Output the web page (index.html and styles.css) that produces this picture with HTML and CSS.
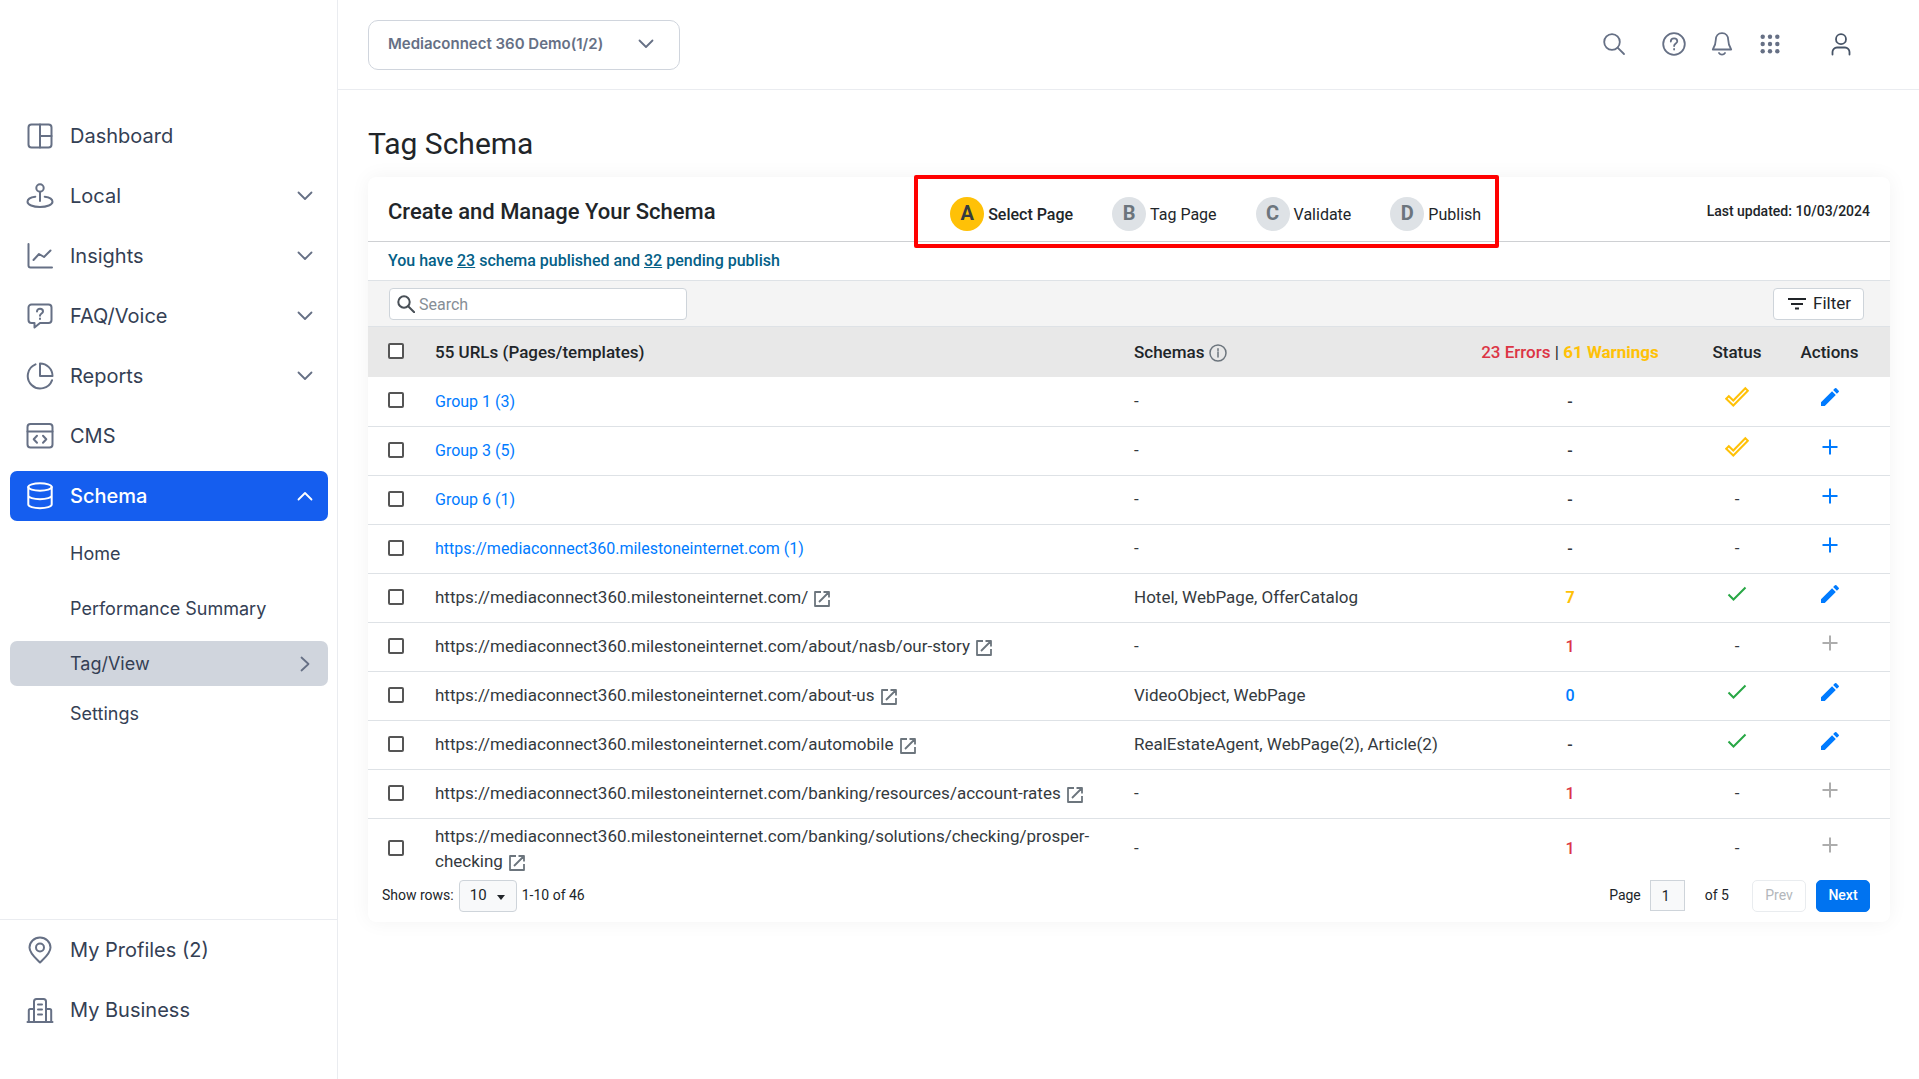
FILE: index.html
```html
<!DOCTYPE html>
<html lang="en">
<head>
  <meta charset="UTF-8">
  <meta name="viewport" content="width=device-width, initial-scale=1.0">
  <title>Tag Schema</title>
  <link rel="stylesheet" href="styles.css">
</head>
<body>
  <!-- Icon sprite -->
  <svg class="sprite" aria-hidden="true">
    <symbol id="i-dashboard" viewBox="0 0 28 28"><rect x="2.5" y="2.5" width="23" height="23" rx="3"/><path d="M14 2.5v23M14 14h11.500"/></symbol>
    <symbol id="i-local" viewBox="0 0 28 28"><circle cx="14" cy="6" r="3.700"/><path d="M14 9.700v9.300M9.300 14.700C4.500 15.300 1.500 17.300 1.500 19.800c0 3 5.500 5.200 12.500 5.200s12.500-2.200 12.500-5.200c0-2.500-3-4.500-7.800-5.100"/></symbol>
    <symbol id="i-insights" viewBox="0 0 28 28"><path d="M2.500 2v21.500a2 2 0 0 0 2 2H26M7.500 18l5.500-6 5 3 6.500-6.500"/></symbol>
    <symbol id="i-faq" viewBox="0 0 28 28"><path d="M5.500 2.500h17a3 3 0 0 1 3 3V18a3 3 0 0 1-3 3H14l-5.500 4.500V21h-3a3 3 0 0 1-3-3V5.500a3 3 0 0 1 3-3z"/><path d="M11 9.500c0-1.600 1.300-2.800 3-2.800s3 1.200 3 2.700c0 2.100-3 2.100-3 4.300M14 16.600v.4"/></symbol>
    <symbol id="i-reports" viewBox="0 0 28 28"><path d="M9.500 2.400A12.500 12.500 0 1 0 26 18.300"/><path d="M14 1.500A12.500 12.500 0 0 1 26.500 14H14z"/></symbol>
    <symbol id="i-cms" viewBox="0 0 28 28"><rect x="1.500" y="2" width="25" height="23.500" rx="3"/><path d="M1.500 9.500h25M11 13.700l-3.300 3.500 3.300 3.500M17 13.700l3.300 3.500-3.300 3.500"/></symbol>
    <symbol id="i-schema" viewBox="0 0 28 28"><ellipse cx="14" cy="5" rx="11.700" ry="3.700"/><path d="M2.300 5v17.500c0 2 5.200 3.700 11.700 3.700s11.700-1.700 11.700-3.700V5M2.300 13.500c0 2 5.200 3.700 11.700 3.700s11.700-1.700 11.700-3.700"/></symbol>
    <symbol id="i-pin" viewBox="0 0 28 28"><path d="M14 26.500c-4-4-10.500-9-10.500-15a10.500 10 0 0 1 21 0c0 6-6.500 11-10.500 15z"/><circle cx="14" cy="11.500" r="4"/></symbol>
    <symbol id="i-business" viewBox="0 0 28 28"><path d="M1.500 26h25M2.800 26V14.500a1.500 1.500 0 0 1 1.500-1.500H8M25.200 26V14.500a1.500 1.500 0 0 0-1.500-1.500H20M8 26V5.500A2.500 2.500 0 0 1 10.500 3h7A2.500 2.500 0 0 1 20 5.500V26M12 8.500h4M12 13.500h4M12 18.500h4"/></symbol>
    <symbol id="i-down" viewBox="0 0 16 16"><path d="M1.500 4.500L8 11l6.500-6.500"/></symbol>
    <symbol id="i-up" viewBox="0 0 16 16"><path d="M1.500 11.500L8 5l6.500 6.500"/></symbol>
    <symbol id="i-right" viewBox="0 0 16 16"><path d="M4.500 1.500L11.500 8l-7 6.500"/></symbol>
    <symbol id="i-search" viewBox="0 0 24 24"><circle cx="10" cy="10" r="7.800"/><path d="M15.600 15.600l6.400 6.400"/></symbol>
    <symbol id="i-help" viewBox="0 0 24 24"><circle cx="12" cy="12" r="10.800"/><path d="M8.800 9.600c0-1.900 1.400-3.200 3.300-3.200s3.200 1.300 3.200 2.900c0 2.300-3.200 2.300-3.200 4.700M12.100 17v.5"/></symbol>
    <symbol id="i-bell" viewBox="0 0 24 24"><path d="M12 1.200c3.900 0 6.200 2.800 6.200 6.500 0 4.800 1.200 6.800 3 9.800H2.800c1.800-3 3-5 3-9.800C5.800 4 8.100 1.200 12 1.200zM9 21c.8 1.200 1.800 1.600 3 1.600s2.200-.4 3-1.600"/></symbol>
    <symbol id="i-grid" viewBox="0 0 24 24"><g fill="currentColor" stroke="none"><circle cx="4.700" cy="4.700" r="2.200"/><circle cx="12" cy="4.700" r="2.200"/><circle cx="19.300" cy="4.700" r="2.200"/><circle cx="4.700" cy="12" r="2.200"/><circle cx="12" cy="12" r="2.200"/><circle cx="19.300" cy="12" r="2.200"/><circle cx="4.700" cy="19.300" r="2.200"/><circle cx="12" cy="19.300" r="2.200"/><circle cx="19.300" cy="19.300" r="2.200"/></g></symbol>
    <symbol id="i-user" viewBox="0 0 24 24"><circle cx="12" cy="7.200" r="5"/><path d="M3.500 22.500V20a4.500 4.500 0 0 1 4.500-4.500h8a4.500 4.500 0 0 1 4.500 4.500v2.500"/></symbol>
    <symbol id="i-lens" viewBox="0 0 18 18"><circle cx="7" cy="7" r="5.700"/><path d="M11.200 11.200l6 6"/></symbol>
    <symbol id="i-filter" viewBox="0 0 18 18"><path d="M0 4h18M3 9h12M7 13.500h4"/></symbol>
    <symbol id="i-info" viewBox="0 0 18 18"><circle cx="9" cy="9" r="8"/><path d="M9 8v5M9 4.800v1.600"/></symbol>
    <symbol id="i-open" viewBox="0 0 16 16"><path d="M7 1H1v14h14V9M9.500 1H15v5.500M15 1L5 11"/></symbol>
    <symbol id="i-double" viewBox="0 0 24 24"><path d="M1.200 13.700l2.600-2.500 4.500 4.300L20.300 3.200 22.800 5.700 8.300 20.500z"/></symbol>
    <symbol id="i-check" viewBox="0 0 24 24"><path d="M3.500 12.500l5 5L20.500 5.500"/></symbol>
    <symbol id="i-pencil" viewBox="0 0 24 24"><path fill="currentColor" stroke="none" d="M3 17.250V21h3.750L17.810 9.940l-3.750-3.750L3 17.250zM20.710 7.040a1 1 0 0 0 0-1.410l-2.340-2.340a1 1 0 0 0-1.410 0l-1.830 1.830 3.750 3.750 1.830-1.830z"/></symbol>
    <symbol id="i-plus" viewBox="0 0 24 24"><path d="M12 4.500v15M4.500 12h15"/></symbol>
  </svg>

  <div class="layout">
    <!-- Sidebar -->
    <aside class="sidebar">
      <nav class="nav">
        <a class="nav-item" href="#"><svg class="nav-icon"><use href="#i-dashboard"/></svg><span>Dashboard</span></a>
        <a class="nav-item" href="#"><svg class="nav-icon"><use href="#i-local"/></svg><span>Local</span><svg class="chevron"><use href="#i-down"/></svg></a>
        <a class="nav-item" href="#"><svg class="nav-icon"><use href="#i-insights"/></svg><span>Insights</span><svg class="chevron"><use href="#i-down"/></svg></a>
        <a class="nav-item" href="#"><svg class="nav-icon"><use href="#i-faq"/></svg><span>FAQ/Voice</span><svg class="chevron"><use href="#i-down"/></svg></a>
        <a class="nav-item" href="#"><svg class="nav-icon"><use href="#i-reports"/></svg><span>Reports</span><svg class="chevron"><use href="#i-down"/></svg></a>
        <a class="nav-item" href="#"><svg class="nav-icon"><use href="#i-cms"/></svg><span>CMS</span></a>
        <a class="nav-item active" href="#"><svg class="nav-icon"><use href="#i-schema"/></svg><span>Schema</span><svg class="chevron"><use href="#i-up"/></svg></a>
        <a class="sub-item" href="#">Home</a>
        <a class="sub-item" href="#">Performance Summary</a>
        <a class="sub-item current" href="#">Tag/View<svg class="chevron"><use href="#i-right"/></svg></a>
        <a class="sub-item" href="#">Settings</a>
      </nav>
      <nav class="nav-bottom">
        <a class="nav-item" href="#"><svg class="nav-icon"><use href="#i-pin"/></svg><span>My Profiles (2)</span></a>
        <a class="nav-item" href="#"><svg class="nav-icon"><use href="#i-business"/></svg><span>My Business</span></a>
      </nav>
    </aside>

    <div class="main">
      <!-- Top bar -->
      <header class="topbar">
        <div class="account">
          <select aria-label="Account"><option>Mediaconnect 360 Demo(1/2)</option></select>
          <svg class="chevron"><use href="#i-down"/></svg>
        </div>
        <div class="tools">
          <button class="tool tool-search" aria-label="Search"><svg><use href="#i-search"/></svg></button>
          <button class="tool" aria-label="Help"><svg><use href="#i-help"/></svg></button>
          <button class="tool" aria-label="Notifications"><svg><use href="#i-bell"/></svg></button>
          <button class="tool" aria-label="Apps"><svg><use href="#i-grid"/></svg></button>
          <button class="tool tool-user" aria-label="Profile"><svg><use href="#i-user"/></svg></button>
        </div>
      </header>

      <main class="content">
        <h1>Tag Schema</h1>
        <section class="card">
          <div class="card-head">
            <h2>Create and Manage Your Schema</h2>
            <ol class="steps">
              <li class="step on"><b>A</b>Select Page</li>
              <li class="step"><b>B</b>Tag Page</li>
              <li class="step"><b>C</b>Validate</li>
              <li class="step"><b>D</b>Publish</li>
            </ol>
            <span class="updated">Last updated: 10/03/2024</span>
          </div>
          <p class="summary">You have <a href="#">23</a> schema published and <a href="#">32</a> pending publish</p>
          <div class="toolbar">
            <div class="search">
              <svg><use href="#i-lens"/></svg>
              <input type="text" placeholder="Search" aria-label="Search">
            </div>
            <button class="filter"><svg><use href="#i-filter"/></svg>Filter</button>
          </div>

          <table class="urls">
            <colgroup><col class="c-check"><col><col class="c-schemas"><col class="c-errors"><col class="c-status"><col class="c-actions"></colgroup>
            <thead>
              <tr>
                <th><input type="checkbox" aria-label="Select all"></th>
                <th>55 URLs (Pages/templates)</th>
                <th>Schemas <svg class="info"><use href="#i-info"/></svg></th>
                <th class="mid"><span class="error">23 Errors</span> <span class="sep">|</span> <span class="warning">61 Warnings</span></th>
                <th class="mid">Status</th>
                <th class="mid">Actions</th>
              </tr>
            </thead>
            <tbody>
              <tr>
                <td><input type="checkbox" aria-label="Select row"></td>
                <td><a href="#">Group 1 (3)</a></td>
                <td>-</td><td class="mid count">-</td>
                <td class="mid"><svg class="mark double"><use href="#i-double"/></svg></td>
                <td class="mid"><button class="act" aria-label="Edit"><svg class="mark"><use href="#i-pencil"/></svg></button></td>
              </tr>
              <tr>
                <td><input type="checkbox" aria-label="Select row"></td>
                <td><a href="#">Group 3 (5)</a></td>
                <td>-</td><td class="mid count">-</td>
                <td class="mid"><svg class="mark double"><use href="#i-double"/></svg></td>
                <td class="mid"><button class="act" aria-label="Add"><svg class="mark"><use href="#i-plus"/></svg></button></td>
              </tr>
              <tr>
                <td><input type="checkbox" aria-label="Select row"></td>
                <td><a href="#">Group 6 (1)</a></td>
                <td>-</td><td class="mid count">-</td><td class="mid">-</td>
                <td class="mid"><button class="act" aria-label="Add"><svg class="mark"><use href="#i-plus"/></svg></button></td>
              </tr>
              <tr>
                <td><input type="checkbox" aria-label="Select row"></td>
                <td><a href="#">https://mediaconnect360.milestoneinternet.com (1)</a></td>
                <td>-</td><td class="mid count">-</td><td class="mid">-</td>
                <td class="mid"><button class="act" aria-label="Add"><svg class="mark"><use href="#i-plus"/></svg></button></td>
              </tr>
              <tr>
                <td><input type="checkbox" aria-label="Select row"></td>
                <td>https://mediaconnect360.milestoneinternet.com/ <svg class="open"><use href="#i-open"/></svg></td>
                <td>Hotel, WebPage, OfferCatalog</td><td class="mid count warning">7</td>
                <td class="mid"><svg class="mark ok"><use href="#i-check"/></svg></td>
                <td class="mid"><button class="act" aria-label="Edit"><svg class="mark"><use href="#i-pencil"/></svg></button></td>
              </tr>
              <tr>
                <td><input type="checkbox" aria-label="Select row"></td>
                <td>https://mediaconnect360.milestoneinternet.com/about/nasb/our-story <svg class="open"><use href="#i-open"/></svg></td>
                <td>-</td><td class="mid count error">1</td><td class="mid">-</td>
                <td class="mid"><button class="act off" aria-label="Add"><svg class="mark"><use href="#i-plus"/></svg></button></td>
              </tr>
              <tr>
                <td><input type="checkbox" aria-label="Select row"></td>
                <td>https://mediaconnect360.milestoneinternet.com/about-us <svg class="open"><use href="#i-open"/></svg></td>
                <td>VideoObject, WebPage</td><td class="mid count zero">0</td>
                <td class="mid"><svg class="mark ok"><use href="#i-check"/></svg></td>
                <td class="mid"><button class="act" aria-label="Edit"><svg class="mark"><use href="#i-pencil"/></svg></button></td>
              </tr>
              <tr>
                <td><input type="checkbox" aria-label="Select row"></td>
                <td>https://mediaconnect360.milestoneinternet.com/automobile <svg class="open"><use href="#i-open"/></svg></td>
                <td>RealEstateAgent, WebPage(2), Article(2)</td><td class="mid count">-</td>
                <td class="mid"><svg class="mark ok"><use href="#i-check"/></svg></td>
                <td class="mid"><button class="act" aria-label="Edit"><svg class="mark"><use href="#i-pencil"/></svg></button></td>
              </tr>
              <tr>
                <td><input type="checkbox" aria-label="Select row"></td>
                <td>https://mediaconnect360.milestoneinternet.com/banking/resources/account-rates <svg class="open"><use href="#i-open"/></svg></td>
                <td>-</td><td class="mid count error">1</td><td class="mid">-</td>
                <td class="mid"><button class="act off" aria-label="Add"><svg class="mark"><use href="#i-plus"/></svg></button></td>
              </tr>
              <tr>
                <td><input type="checkbox" aria-label="Select row"></td>
                <td>https://mediaconnect360.milestoneinternet.com/banking/solutions/checking/prosper-checking <svg class="open"><use href="#i-open"/></svg></td>
                <td>-</td><td class="mid count error">1</td><td class="mid">-</td>
                <td class="mid"><button class="act off" aria-label="Add"><svg class="mark"><use href="#i-plus"/></svg></button></td>
              </tr>
            </tbody>
          </table>

          <!-- Pagination -->
          <div class="pager">
            <div class="pager-rows">
              <label for="rows">Show rows:</label>
              <span class="rows"><select id="rows"><option>10</option></select></span>
              <span>1-10 of 46</span>
            </div>
            <div class="pager-nav">
              <label for="page">Page</label>
              <input id="page" type="text" value="1">
              <span class="total">of 5</span>
              <button class="prev" disabled>Prev</button>
              <button class="next">Next</button>
            </div>
          </div>
        </section>
      </main>
    </div>
  </div>
</body>
</html>
```

FILE: styles.css
```css
* { box-sizing: border-box; }
body { margin: 0; background: #fff; color: #212529; font-family: Roboto, "Liberation Sans", sans-serif; font-size: 16px; line-height: 25px; }
button, input, select { font: inherit; color: inherit; margin: 0; }
button { cursor: pointer; }
a { color: #007bff; text-decoration: none; }
svg { fill: none; stroke: currentColor; stroke-width: 2; stroke-linecap: round; stroke-linejoin: round; }
.sprite { display: none; }
.layout { display: flex; min-height: 100vh; }

/* Sidebar */
.sidebar { flex: 0 0 338px; display: flex; flex-direction: column; justify-content: space-between; border-right: 1px solid #eaecf0; font-family: Inter, "Liberation Sans", sans-serif; }
.nav { display: flex; flex-direction: column; padding: 111px 9px 0 10px; }
.nav-item { display: flex; align-items: center; gap: 16px; height: 50px; margin-bottom: 10px; padding: 0 15px 0 16px; border-radius: 7px; color: #344054; font-size: 20px; }
.nav-icon { width: 28px; height: 28px; color: #667085; }
.chevron { width: 16px; height: 16px; margin-left: auto; color: #667085; stroke-width: 1.8; }
.nav-item.active { background: #155eef; color: #fff; font-weight: 500; }
.active .nav-icon, .active .chevron { color: #fff; }
.sub-item { display: flex; align-items: center; height: 45px; margin-bottom: 10px; padding: 0 15px 0 60px; border-radius: 7px; color: #344054; font-size: 18px; }
.sub-item.current { background: #d0d5dd; margin-bottom: 5px; }
.nav-bottom { padding: 5px 10px 34px; border-top: 1px solid #eaecf0; }

/* Top bar */
.main { flex: 1; min-width: 0; }
.topbar { display: flex; align-items: center; justify-content: space-between; height: 90px; padding: 0 66px 0 30px; border-bottom: 1px solid #eaecf0; }
.account { position: relative; }
.account select { width: 312px; height: 50px; padding: 0 60px 2px 19px; border: 1px solid #d0d5dd; border-radius: 10px; background: #fff; color: #667085; font-family: Inter, "Liberation Sans", sans-serif; font-size: 15px; font-weight: 600; appearance: none; }
.account .chevron { position: absolute; right: 26px; top: 16px; pointer-events: none; }
.tools { display: flex; gap: 24px; margin-bottom: 2px; }
.tool { width: 24px; height: 24px; padding: 0; border: 0; background: none; color: #667085; }
.tool svg { display: block; width: 24px; height: 24px; stroke-width: 1.8; }
.tool-search { margin-right: 12px; }
.tool-user { margin-left: 23px; color: #475467; }

/* Card */
.content { padding: 35px 29px 40px 30px; }
h1 { margin: 0 0 14px; font-size: 30px; font-weight: 400; line-height: 38px; }
.card { border-radius: 8px; background: #fff; box-shadow: 0 0 20px rgba(0,0,0,0.05); }
.card-head { display: flex; align-items: center; justify-content: space-between; height: 65px; padding: 5px 20px 0; border-bottom: 1px solid #ced0d3; }
h2 { margin: 0; font-size: 22px; font-weight: 500; }
.steps { position: relative; display: flex; gap: 39px; margin: 5px 0 0 9px; padding: 0; list-style: none; }
.steps::after { content: ""; position: absolute; inset: -22px -18px -17px -36px; border: 4px solid #f00; border-radius: 2px; pointer-events: none; }
.step { display: flex; align-items: center; gap: 4px; }
.step b { width: 34px; height: 34px; border-radius: 50%; background: #dee2e6; color: #6c757d; font-size: 20px; line-height: 33px; text-align: center; }
.step.on { font-weight: 500; }
.step.on b { background: #ffc107; color: #343a40; }
.updated { font-size: 14px; font-weight: 500; }
.summary { margin: 0; padding: 6px 20px 7px; color: #045f87; font-weight: 500; }
.summary a { color: inherit; text-decoration: underline; }
.toolbar { display: flex; align-items: center; justify-content: space-between; height: 47px; padding: 0 26px 0 21px; border: solid #dee2e6; border-width: 1px 0; background: #f4f4f4; }
.search { display: flex; align-items: center; gap: 4px; width: 298px; height: 32px; padding: 0 8px 0 7px; border: 1px solid #ced4da; border-radius: 4px; background: #fff; color: #495057; }
.search svg { flex: none; width: 18px; height: 18px; }
.search input { flex: 1; min-width: 0; padding: 1px 0 0; border: 0; outline: 0; background: none; }
.search input::placeholder { color: #868e96; }
.filter { display: flex; align-items: center; gap: 7px; height: 32px; padding: 0 12px 0 14px; border: 1px solid #ced4da; border-radius: 4px; background: #fff; font-size: 17px; }
.filter svg { width: 18px; height: 18px; stroke-linecap: butt; }

/* Table */
.urls { width: 100%; border-collapse: collapse; table-layout: fixed; font-size: 17px; }
.c-check { width: 67px; }
.c-schemas { width: 301px; }
.c-errors { width: 270px; }
.c-status { width: 64px; }
.c-actions { width: 121px; }
.urls th { height: 50px; padding: 0; background: #e8e8e8; font-weight: 500; text-align: left; }
.urls td { height: 49px; padding: 5px 0; border-bottom: 1px solid #dee2e6; color: #343a40; }
.urls td:nth-child(2) { padding-right: 30px; }
.urls td:nth-child(3) { white-space: nowrap; }
.urls tr:last-child td { border-bottom: 0; }
.urls td a { font-size: 16px; }
.urls .mid { text-align: center; }
.urls input { display: block; width: 16px; height: 16px; margin: 0 0 2px 20px; border: 2px solid #555; border-radius: 2px; background: #fff; appearance: none; }
.urls .count { font-size: 16px; font-weight: 500; }
.urls .error { color: #dc3545; }
.urls .warning { color: #ffc107; font-weight: 700; }
.urls .zero { color: #007bff; }
.sep { font-weight: 400; }
.info { width: 18px; height: 18px; color: #6c757d; vertical-align: -4px; stroke-width: 1.5; }
.open { width: 16px; height: 16px; margin-left: 2px; color: #6c757d; vertical-align: -4px; stroke-width: 1.8; stroke-linecap: butt; }
.mark { display: block; width: 24px; height: 24px; margin: 0 auto 8px; stroke-linecap: butt; stroke-linejoin: miter; }
.double { color: #ffc107; }
.ok { color: #28a745; }
.act { display: block; margin: 0 auto; padding: 0; border: 0; background: none; color: #007bff; }
.act.off { color: #adadad; }

/* Pagination */
.pager { display: flex; align-items: center; justify-content: space-between; padding: 1px 20px 10px 14px; font-size: 14px; }
.pager-rows, .pager-nav { display: flex; align-items: center; }
.rows { position: relative; margin: 0 5px; }
.rows select { display: block; width: 58px; height: 32px; padding: 0 10px; border: 1px solid #ced4da; border-radius: 4px; background: #f8f9fa; font-size: 15px; appearance: none; }
.rows::after { content: ""; position: absolute; right: 12px; top: 15px; border: 4px solid transparent; border-top: 5px solid #212529; border-bottom: 0; }
.pager-nav input { width: 35px; height: 31px; margin: 0 20px 0 9px; padding: 0 11px; border: 1px solid #ced4da; background: #f8f9fa; }
.prev, .next { width: 54px; height: 32px; padding: 0; border: 1px solid #e9ecef; border-radius: 5px; background: #fff; }
.prev { margin: 0 10px 0 23px; color: #b3b7bb; }
.next { border-color: #0073f0; background: #0073f0; color: #fff; font-weight: 500; }
```
